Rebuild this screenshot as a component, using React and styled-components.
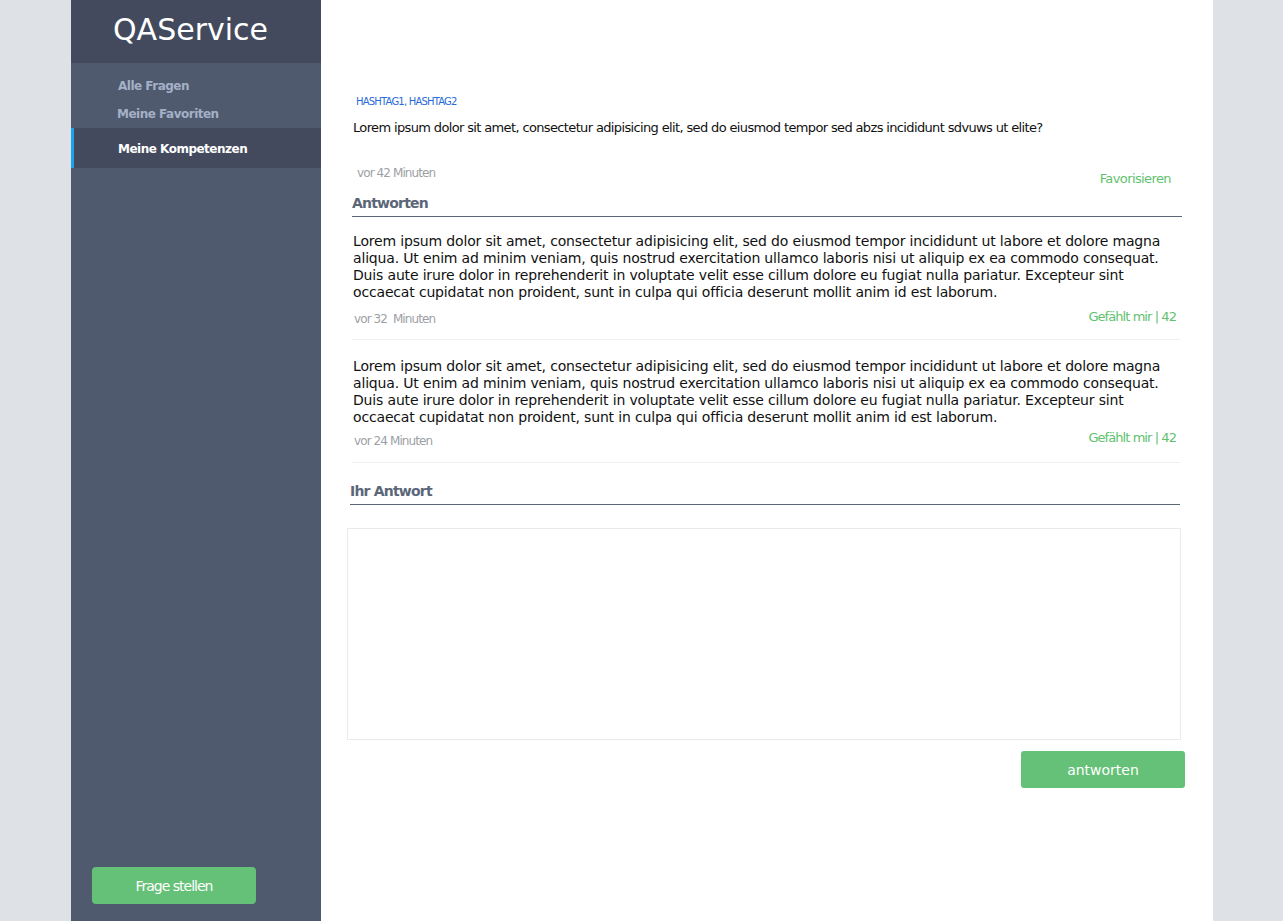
import React from "react";
import styled, { createGlobalStyle } from "styled-components";

const Global = createGlobalStyle`
  html, body { margin: 0; padding: 0; background: #dee1e6; height: 100%; }
  body { font-family: "DejaVu Sans", sans-serif; }
  #root { height: 100%; }
  * { box-sizing: border-box; }
`;

const Page = styled.div`
  display: flex;
  height: 921px;
  padding-left: 71px;
  overflow: hidden;
`;

const Sidebar = styled.aside`
  width: 250px;
  flex: none;
  background: #4f5a6e;
  display: flex;
  flex-direction: column;
`;

const Brand = styled.div`
  height: 63px;
  background: #434a5d;
  color: #fff;
  font-size: 30px;
  padding-left: 42px;
  display: flex;
  align-items: center;
  padding-bottom: 4px;
`;

const Nav = styled.nav`
  display: flex;
  flex-direction: column;
  padding-top: 9px;
`;

const NavItem = styled.div`
  font-size: 12px;
  font-weight: bold;
  letter-spacing: -0.5px;
  height: ${(p) => (p.$active ? "40px" : "28px")};
  display: flex;
  align-items: center;
  padding-left: ${(p) => (p.$active ? "44px" : "47px")};
  padding-top: ${(p) => (p.$active ? "2px" : "0")};
  color: ${(p) => (p.$active ? "#ffffff" : "#a4b0c6")};
  background: ${(p) => (p.$active ? "#434a5d" : "transparent")};
  border-left: ${(p) => (p.$active ? "3px solid #1ba4ea" : "none")};
  margin-left: ${(p) => (p.$indent ? "-1px" : "0")};
`;

const SideFoot = styled.div`
  margin-top: auto;
  padding: 0 0 17px 21px;
`;

const GreenButton = styled.button`
  width: 164px;
  height: 37px;
  border: none;
  border-radius: ${(p) => p.$radius || 4}px;
  background: #64c177;
  color: #fff;
  font-family: "DejaVu Sans", sans-serif;
  font-size: 14px;
  letter-spacing: ${(p) => p.$ls || "0"};
  cursor: pointer;
`;

const Main = styled.main`
  width: 892px;
  flex: none;
  background: #fff;
  display: flex;
  flex-direction: column;
`;

const TopBar = styled.div`
  height: 63px;
`;

const Content = styled.div`
  padding: 32px 31px 0 31px;
  display: flex;
  flex-direction: column;
`;

const Tags = styled.div`
  font-size: 10px;
  letter-spacing: -0.8px;
  color: #2a6bd9;
  padding-left: 4px;
  line-height: 14px;
`;

const Question = styled.div`
  font-size: 13px;
  letter-spacing: -0.64px;
  color: #111;
  margin-top: 11px;
  padding-left: 1px;
  line-height: 16px;
`;

const QMeta = styled.div`
  display: flex;
  justify-content: space-between;
  margin-top: 30px;
  padding-left: 5px;
  padding-right: 11px;
`;

const Time = styled.span`
  font-size: 12px;
  letter-spacing: -0.9px;
  color: #9c9fa4;
  margin-top: ${(p) => p.$mt || 0}px;
`;

const GreenLink = styled.span`
  font-size: 13px;
  letter-spacing: ${(p) => p.$ls || "-0.6px"};
  color: #5fc26f;
  margin-top: ${(p) => p.$mt || 0}px;
`;

const SectionTitle = styled.div`
  font-size: 14px;
  line-height: 15px;
  font-weight: bold;
  letter-spacing: -0.8px;
  color: #5b6779;
  border-bottom: 1px solid #5b6779;
  padding-bottom: 5px;
  margin-left: ${(p) => p.$ml || 0}px;
  margin-right: ${(p) => p.$mr || 0}px;
  margin-top: ${(p) => p.$mt || 0}px;
`;

const Answer = styled.div`
  border-bottom: 1px solid #eeeff0;
  padding: ${(p) => p.$pt}px 0 ${(p) => p.$pb}px 1px;
  margin-right: 2px;
`;

const AnswerText = styled.p`
  margin: 0;
  font-size: 14px;
  line-height: 17px;
  color: #111;
  letter-spacing: -0.165px;
`;

const AnswerMeta = styled.div`
  display: flex;
  justify-content: space-between;
  align-items: flex-start;
  padding-right: 4px;
  padding-left: 1px;
`;

const TextArea = styled.textarea`
  display: block;
  width: 834px;
  height: 212px;
  margin-top: 23px;
  margin-left: -5px;
  border: 1px solid #e9eaec;
  resize: none;
  outline: none;
`;

const Actions = styled.div`
  display: flex;
  justify-content: flex-end;
  margin-top: 11px;
  margin-right: -3px;
`;

const lorem =
  "Lorem ipsum dolor sit amet, consectetur adipisicing elit, sed do eiusmod tempor incididunt ut labore et dolore magna aliqua. Ut enim ad minim veniam, quis nostrud exercitation ullamco laboris nisi ut aliquip ex ea commodo consequat. Duis aute irure dolor in reprehenderit in voluptate velit esse cillum dolore eu fugiat nulla pariatur. Excepteur sint occaecat cupidatat non proident, sunt in culpa qui officia deserunt mollit anim id est laborum.";

const answers = [
  { id: 1, time: "vor 32\u00a0 Minuten", pt: 16, pb: 13, tmt: 11, gmt: 8 },
  { id: 2, time: "vor 24 Minuten", pt: 18, pb: 14, tmt: 8, gmt: 4 },
];

export default function App() {
  return (
    <>
      <Global />
      <Page>
        <Sidebar>
          <Brand>QAService</Brand>
          <Nav>
            <NavItem>Alle Fragen</NavItem>
            <NavItem $indent>Meine Favoriten</NavItem>
            <NavItem $active>Meine Kompetenzen</NavItem>
          </Nav>
          <SideFoot>
            <GreenButton $ls="-1px">Frage stellen</GreenButton>
          </SideFoot>
        </Sidebar>
        <Main>
          <TopBar />
          <Content>
            <Tags>HASHTAG1, HASHTAG2</Tags>
            <Question>
              Lorem ipsum dolor sit amet, consectetur adipisicing elit, sed do eiusmod tempor sed abzs incididunt sdvuws ut elite?
            </Question>
            <QMeta>
              <Time>vor 42 Minuten</Time>
              <GreenLink $mt={5}>Favorisieren</GreenLink>
            </QMeta>
            <SectionTitle $mt={10}>Antworten</SectionTitle>
            {answers.map((a) => (
              <Answer key={a.id} $pt={a.pt} $pb={a.pb}>
                <AnswerText>{lorem}</AnswerText>
                <AnswerMeta>
                  <Time $mt={a.tmt}>{a.time}</Time>
                  <GreenLink $ls="-0.93px" $mt={a.gmt}>Gefählt mir | 42</GreenLink>
                </AnswerMeta>
              </Answer>
            ))}
            <SectionTitle $ml={-2} $mr={2} $mt={21}>Ihr Antwort</SectionTitle>
            <TextArea />
            <Actions>
              <GreenButton $radius={3}>antworten</GreenButton>
            </Actions>
          </Content>
        </Main>
      </Page>
    </>
  );
}
